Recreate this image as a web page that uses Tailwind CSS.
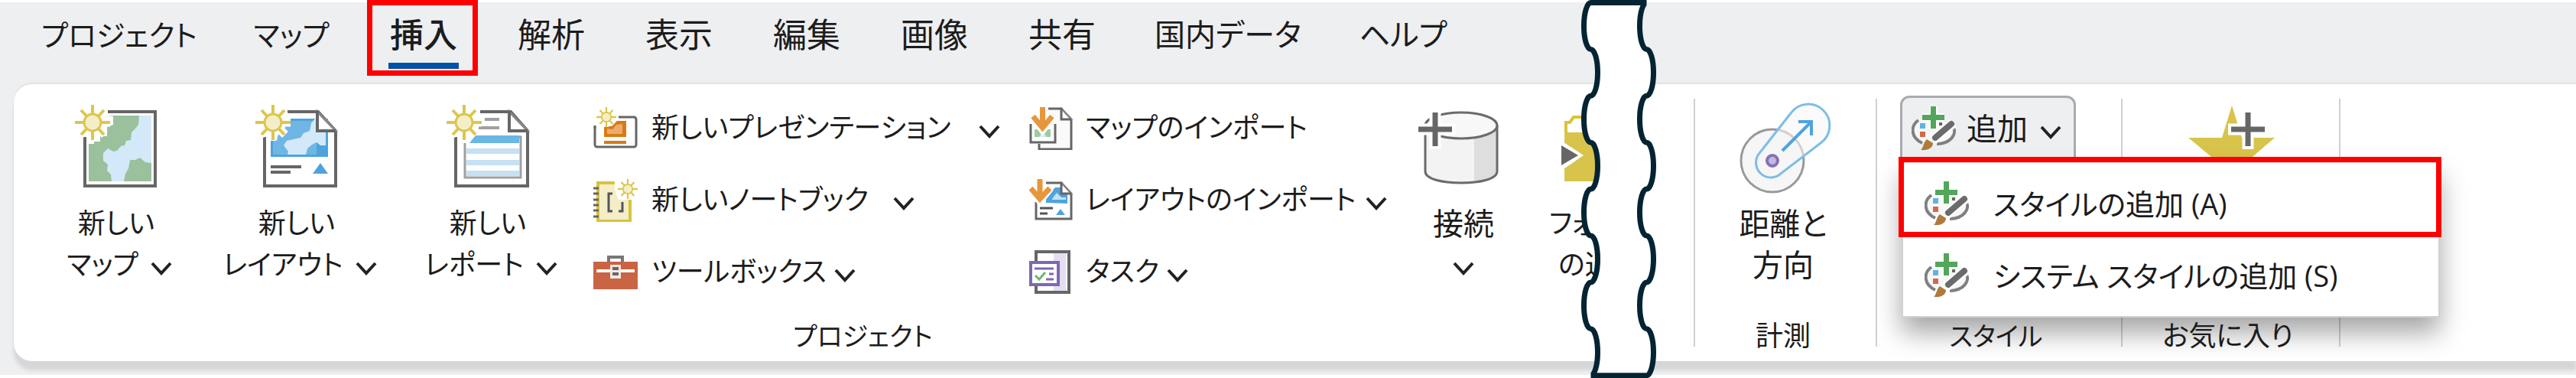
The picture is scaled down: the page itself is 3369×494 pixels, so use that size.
<!DOCTYPE html>
<html lang="ja">

<head>
    <meta charset="UTF-8">
    <meta name="viewport" content="width=device-width, initial-scale=1.0">
    <title>挿入</title>
    <script src="https://cdn.jsdelivr.net/npm/@tailwindcss/browser@4"></script>
</head>

<body class="bg-white">
    <!-- shared symbols -->
    <svg class="hidden">
        <symbol id="chevron" viewBox="0 0 28 18">
            <path d="M2 2L14 15L26 2" fill="none" stroke="#222" stroke-width="4" />
        </symbol>
        <symbol id="sun" viewBox="0 0 46 46">
            <path d="M23 0V46M0 23H46M7 7L39 39M39 7L7 39" stroke="#fff" stroke-width="11" />
            <circle cx="23" cy="23" r="17" fill="#fff" />
            <path d="M23 0V46M0 23H46M8 7L38 39M38 7L8 39" stroke="#dcc64d" stroke-width="4" />
            <circle cx="23" cy="23" r="11" fill="#f4eec8" stroke="#dcc64d" stroke-width="3" />
        </symbol>
        <symbol id="plus" viewBox="0 0 56 56">
            <path d="M28 2V54M2 28H54" stroke="#fff" stroke-width="15" />
            <path d="M28 6V50M6 28H50" stroke="#666" stroke-width="7" />
        </symbol>
        <symbol id="palette" viewBox="0 0 58 58">
            <path d="M9 17C-2 26 -1 42 14 48L28 44L36 49C50 49 60 38 54 26L50 22L30 16Z" fill="#f7f7f7" />
            <path d="M9 18C-2 26 -1 41 14 48M53 25C62 36 50 49 33 49" fill="none" stroke="#808080" stroke-width="4" />
            <path d="M36 23H40" stroke="#666" stroke-width="4" />
            <path d="M28.500 0V29M14 14.500H43" stroke="#fff" stroke-width="11" />
            <path d="M28.500 0V29M14 14.500H43" stroke="#54a65a" stroke-width="7" />
            <path d="M11 22H18V29H11Z" fill="#62b1e3" />
            <path d="M11 33H18V40H11Z" fill="#d2694a" />
            <path d="M54 22L28 44" stroke="#fff" stroke-width="13" />
            <path d="M52 23L31 41" stroke="#6b6b6b" stroke-width="8" stroke-linecap="round" />
            <path d="M20 43L28 48C28 54 22 58 12 57C16 54 15 47 20 43Z" fill="#b07a3c" />
        </symbol>
    </svg>

    <div class="relative w-full overflow-hidden bg-white pt-[3px] pb-1 font-['Open_Sans','Noto_Sans_CJK_JP',sans-serif] text-[#1c1c1c] whitespace-nowrap [font-feature-settings:'palt']">
        <div class="bg-[#eeeff1] pb-[18px]">
            <!-- tabs -->
            <nav class="flex h-[107px] items-start gap-[75px] pl-[54px] pt-3 text-[44px] leading-[60px]">
                <button class="w-[200px] text-[38px]">プロジェクト</button>
                <button class="w-[104px] text-[38px]">マップ</button>
                <button class="relative flex w-[92px] flex-col items-center font-medium">
                    挿入
                    <span class="mt-[7px] h-2 w-full bg-[#0053a6]"></span>
                    <span class="absolute -left-7 -top-[15px] h-[99px] w-[145px] border-[7px] border-[#f00]"></span>
                </button>
                <button class="w-[92px]">解析</button>
                <button class="w-[92px]">表示</button>
                <button class="w-[92px]">編集</button>
                <button class="w-[92px]">画像</button>
                <button class="w-[92px]">共有</button>
                <button class="w-[192px] text-[40px]">国内データ</button>
                <button class="w-[116px] text-[40px]">ヘルプ</button>
            </nav>

            <!-- ribbon -->
            <div class="ml-[18px] flex h-[362px] rounded-l-3xl bg-white text-[36px] leading-[54px] shadow-[0_-2px_2px_#e0e1e3,0_12px_5px_#d5d6d8]">
                <section class="flex w-[2197px] flex-col justify-between pt-[26px] pb-[11px]">
                    <div class="flex gap-[38px] pl-14">
                        <button class="flex w-[164px] flex-col items-center">
                            <svg class="mb-[13px] size-[116px]" viewBox="0 0 116 116">
                                <path d="M13 10H105V107H13Z" fill="#fff" stroke="#666" stroke-width="4" />
                                <path d="M18 15H100V101H18Z" fill="#9ac19b" />
                                <path d="M84 15L83 27L79 32L74 37L73 47L67 48L65 54L60 55L55 61L50 62L43 58L37 64L37 74L43 79L42 87L47 92L48 101H64L66 91L70 84L72 73H79L85 70L92 76L100 77V15Z" fill="#d3e9f9" />
                                <path d="M8 6H43V15L50 16L50 27L42 30L42 42L33 42V49H25V52H18V43H8Z" fill="#fff" />
                                <use href="#sun" y="1" width="46" height="46" />
                            </svg>
                            <span class="pr-2">新しい</span>
                            <span class="flex items-center gap-4">マップ<svg class="mt-2.5 h-[18px] w-7"><use href="#chevron" /></svg></span>
                        </button>
                        <button class="flex w-[232px] flex-col items-center">
                            <svg class="mb-[13px] size-[116px]" viewBox="0 0 116 116">
                                <path d="M12 10H82L105 35V107H12Z" fill="#fff" stroke="#666" stroke-width="4" />
                                <path d="M20 19H95V69H20Z" fill="#4fa3dc" />
                                <path d="M23 22H80V66H23Z" fill="#70b6e5" />
                                <path d="M78 19L73 25L71 35L63 38L59 44L50 46L41 48L37 54L43 62L42 66H66L68 58L74 53L80 50L85 54H92V35H79V19Z" fill="#d3e9f9" />
                                <path d="M20 82H60M20 89H46" stroke="#666" stroke-width="4" />
                                <path d="M85 77L95 91H75Z" fill="#4fa3dc" />
                                <path d="M81 10V35H105Z" fill="#fff" stroke="#888" stroke-width="3" />
                                <path d="M81 9V35H105" fill="none" stroke="#666" stroke-width="4" />
                                <path d="M8 6H42V22L36 36L30 40L27 48L18 48V43H8Z" fill="#fff" />
                                <use href="#sun" y="1" width="46" height="46" />
                            </svg>
                            <span class="pr-2">新しい</span>
                            <span class="flex items-center gap-4">レイアウト<svg class="mt-2.5 h-[18px] w-7"><use href="#chevron" /></svg></span>
                        </button>
                        <button class="flex w-[192px] flex-col items-center">
                            <svg class="mb-[13px] size-[116px]" viewBox="0 0 116 116">
                                <path d="M12 10H84L106 35V107H12Z" fill="#fff" stroke="#666" stroke-width="4" />
                                <path d="M50 20H69M42 31H69" stroke="#a0a0a0" stroke-width="4" />
                                <path d="M24 43H97V96H24Z" fill="#fff" stroke="#a0a0a0" stroke-width="3" />
                                <path d="M28 41H95V51H28Z" fill="#68b7e5" />
                                <path d="M26 58H95V65H26ZM26 73H95V80H26ZM26 87H95V94H26Z" fill="#c5e1f3" />
                                <path d="M82 10V35H106Z" fill="#fff" stroke="#888" stroke-width="3" />
                                <path d="M82 9V35H106" fill="none" stroke="#666" stroke-width="4" />
                                <path d="M8 6H44V22H38L40 38L30 51H20V43H8Z" fill="#fff" />
                                <use href="#sun" y="1" width="46" height="46" />
                            </svg>
                            <span class="pr-2">新しい</span>
                            <span class="flex items-center gap-4">レポート<svg class="mt-2.5 h-[18px] w-7"><use href="#chevron" /></svg></span>
                        </button>

                        <div class="flex w-[532px] flex-col gap-8">
                            <button class="flex h-[62px] items-center">
                                <svg class="mr-[18px] size-[58px]" viewBox="0 0 58 58">
                                    <rect x="2" y="15" width="54" height="39" rx="3" fill="#fff" stroke="#666" stroke-width="3" />
                                    <path d="M14 20H43V41H14Z" fill="#d87a16" />
                                    <path d="M18 37V30L25 31L30 25L38 24V37Z" fill="#ecab6c" />
                                    <path d="M14 48H43" stroke="#d87a16" stroke-width="4" />
                                    <path d="M0 6H33V18L24 27H0Z" fill="#fff" />
                                    <path d="M2 26V30" stroke="#666" stroke-width="3" />
                                    <use href="#sun" x="4" y="2" width="26" height="26" />
                                </svg>
                                新しいプレゼンテーション
                                <svg class="ml-auto mt-2.5 h-[18px] w-7"><use href="#chevron" /></svg>
                            </button>
                            <button class="flex h-[62px] items-center">
                                <svg class="mr-[18px] size-[58px]" viewBox="0 0 58 58">
                                    <path d="M6 7H48V57H6Z" fill="#f4eec8" stroke="#d8c33b" stroke-width="4" />
                                    <path d="M0 14H7M0 21H7M0 29H7M0 36H7M0 43H7M0 51H7" stroke="#666" stroke-width="3" />
                                    <path d="M28 3H58V29H33L28 16Z" fill="#fff" />
                                    <path d="M25 21H20V44H25M33 44H38V32" fill="none" stroke="#555" stroke-width="3" />
                                    <use href="#sun" x="32" y="2" width="26" height="26" />
                                </svg>
                                新しいノートブック
                                <svg class="ml-8 mt-2.5 h-[18px] w-7"><use href="#chevron" /></svg>
                            </button>
                            <button class="flex h-[62px] items-center">
                                <svg class="mr-[18px] size-[58px]" viewBox="0 0 58 58">
                                    <path d="M20 17V10H38V17" fill="none" stroke="#777" stroke-width="4" />
                                    <path d="M0 16H58V52H0Z" fill="#c96444" />
                                    <path d="M4 28H54" stroke="#fff" stroke-width="4" />
                                    <path d="M22 20H36V38H22Z" fill="#f5e8e2" />
                                    <path d="M25 25H33M25 32H33" stroke="#666" stroke-width="4" />
                                </svg>
                                ツールボックス
                                <svg class="ml-2.5 mt-2.5 h-[18px] w-7"><use href="#chevron" /></svg>
                            </button>
                        </div>

                        <div class="flex w-[468px] flex-col gap-8">
                            <button class="flex h-[62px] items-center">
                                <svg class="mr-4 size-[58px]" viewBox="0 0 58 58">
                                    <path d="M13 50V57H55V18L42 4H25" fill="#fafafa" stroke="#666" stroke-width="3" />
                                    <path d="M42 4V18H55Z" fill="#fff" stroke="#888" stroke-width="2" />
                                    <path d="M42 3V18H55" fill="none" stroke="#666" stroke-width="3" />
                                    <path d="M2 24V48H34V24" fill="#fff" stroke="#666" stroke-width="3" />
                                    <path d="M7 31H28V41H7Z" fill="#9ccb9f" />
                                    <path d="M13 41L18 34L23 41Z" fill="#d3e9f9" />
                                    <path d="M17.500 1V32M4 13L17.500 30L31 13" fill="none" stroke="#fff" stroke-width="12" />
                                    <path d="M17.500 2V30M5 14L17.500 29L30 14" fill="none" stroke="#e8963c" stroke-width="7" />
                                </svg>
                                マップのインポート
                            </button>
                            <button class="flex h-[62px] items-center">
                                <svg class="mr-4 size-[58px]" viewBox="0 0 58 58">
                                    <path d="M9 32V54H55V21L42 7H22" fill="#fff" stroke="#666" stroke-width="3" />
                                    <path d="M22 33V25L34 13H41V22H50V34Z" fill="#4fa3dc" />
                                    <path d="M30 28L36 20L42 26H48V29H30Z" fill="#c5e1f3" />
                                    <path d="M42 7V21H55Z" fill="#fff" stroke="#888" stroke-width="2" />
                                    <path d="M42 6V21H55" fill="none" stroke="#666" stroke-width="3" />
                                    <path d="M14 40H31M14 47H24" stroke="#555" stroke-width="3" />
                                    <path d="M41 41L47 49H35Z" fill="#4fa3dc" />
                                    <path d="M14 1V30M2 13L14 29L27 13" fill="none" stroke="#fff" stroke-width="12" />
                                    <path d="M14 2V29M2 14L14 28L27 14" fill="none" stroke="#e8963c" stroke-width="7" />
                                </svg>
                                レイアウトのインポート
                                <svg class="ml-auto mt-2.5 h-[18px] w-7"><use href="#chevron" /></svg>
                            </button>
                            <button class="flex h-[62px] items-center">
                                <svg class="mr-4 size-[58px]" viewBox="0 0 58 58">
                                    <path d="M9 3H52V56H9Z" fill="#fff" stroke="#666" stroke-width="4" />
                                    <path d="M32 5H48V54H32Z" fill="#e5def2" />
                                    <path d="M2 17H38V46H2Z" fill="#fff" stroke="#7d68b4" stroke-width="4" />
                                    <path d="M7 25H32M26 32H32M22 39H32" stroke="#7d68b4" stroke-width="3" />
                                    <path d="M8 34L13 39L21 30" fill="none" stroke="#6cb870" stroke-width="3" />
                                </svg>
                                タスク
                                <svg class="ml-2.5 mt-2.5 h-[18px] w-7"><use href="#chevron" /></svg>
                            </button>
                        </div>

                        <button class="flex w-[124px] flex-col items-center">
                            <svg class="mb-[13px] size-[116px] overflow-visible" viewBox="0 0 116 116">
                                <path d="M8 28V88C8 98 30 103 55 103S102 98 102 88V28Z" fill="#f3f3f3" />
                                <path d="M72 40L102 28V88C102 95 90 100 72 102Z" fill="#dedede" />
                                <path d="M8 28V88C8 98 30 103 55 103S102 98 102 88V28" fill="none" stroke="#6b6b6b" stroke-width="3" />
                                <ellipse cx="55" cy="28" rx="47" ry="17" fill="#f8f8f8" stroke="#6b6b6b" stroke-width="3" />
                                <use href="#plus" x="-7" y="5" width="56" height="56" />
                            </svg>
                            <span class="text-[40px]">接続</span>
                            <svg class="mt-[23px] h-[18px] w-7"><use href="#chevron" /></svg>
                        </button>
                        <button class="flex w-[120px] flex-col items-start pl-3">
                            <svg class="mb-[13px] ml-4 h-[116px] w-[90px]" viewBox="0 0 90 116">
                                <path d="M6 99V24H11L16 17H50L56 24H86V99Z" fill="#fff" stroke="#d8c33b" stroke-width="4" />
                                <path d="M4 37H88V101H4Z" fill="#d8c44a" />
                                <path d="M0 48L29 67L0 87Z" fill="#fff" />
                                <path d="M0 54L22 67L0 80Z" fill="#666" />
                            </svg>
                            <span>フォル</span>
                            <span class="pl-3">の追加</span>
                        </button>
                    </div>
                    <h2 class="pl-6 text-center text-[34px] leading-[44px]">プロジェクト</h2>
                </section>

                <div class="my-[19px] w-0.5 bg-[#cfd1d5]"></div>

                <section class="flex w-[236px] flex-col items-center justify-between pt-[26px] pr-1.5 pb-[11px]">
                    <button class="flex flex-col items-center text-[40px]">
                        <svg class="mb-[13px] size-[116px] overflow-visible" viewBox="0 0 116 116">
                            <circle cx="44" cy="74" r="41" fill="#f6f6f6" stroke="#999" stroke-width="3" />
                            <path d="M28 63L68 12A28 28 0 1 1 107 51L56 90A19 19 0 0 1 28 63Z" fill="#f6f6f6" fill-opacity=".6" stroke="#7dbde6" stroke-width="3" />
                            <path d="M57 61L94 24M78 23H95V41" fill="none" stroke="#4fa3dc" stroke-width="4" />
                            <circle cx="44" cy="74" r="7" fill="#c3b8e0" stroke="#8571b3" stroke-width="4" />
                        </svg>
                        <span>距離と</span>
                        <span>方向</span>
                    </button>
                    <h2 class="text-[36px] leading-[44px]">計測</h2>
                </section>

                <div class="my-[19px] w-0.5 bg-[#cfd1d5]"></div>

                <section class="relative flex w-[319px] flex-col justify-between pt-[15px] pb-[11px]">
                    <button class="ml-[30px] flex h-[86px] w-[230px] items-center rounded-t-xl border-[3px] border-[#a9abb0] bg-[#eeeff1] pl-3 text-[40px]">
                        <svg class="mr-3.5 size-[58px]"><use href="#palette" /></svg>
                        追加
                        <svg class="ml-4 mt-2.5 h-[18px] w-7"><use href="#chevron" /></svg>
                    </button>
                    <div class="absolute left-8 top-[101px] z-10 w-[704px] border-2 border-[#cfd1d5] bg-white pt-1.5 pb-1.5 text-[38px] shadow-[0_20px_32px_rgba(0,0,0,0.35)]">
                        <button class="flex h-[94px] w-full items-center pl-7">
                            <svg class="mr-8 size-[58px]"><use href="#palette" /></svg>
                            スタイルの追加 (A)
                        </button>
                        <button class="flex h-[94px] w-full items-center pl-7">
                            <svg class="mr-8 size-[58px]"><use href="#palette" /></svg>
                            システム スタイルの追加 (S)
                        </button>
                        <span class="absolute -left-1.5 -top-2 h-[105px] w-[710px] border-[7px] border-[#f00]"></span>
                    </div>
                    <h2 class="relative z-20 pr-2 text-center text-[34px] leading-[44px]">スタイル</h2>
                </section>

                <div class="my-[19px] w-0.5 bg-[#cfd1d5]"></div>

                <section class="flex w-[283px] flex-col items-center justify-between pt-[26px] pb-[11px]">
                    <button aria-label="お気に入りに追加">
                        <svg class="size-[116px]" viewBox="0 0 116 116">
                            <path d="M59 2L72 44H115L81 73L94 112L59 88L24 112L37 73L2 44H46Z" fill="#d8c44a" />
                            <use href="#plus" x="52" y="5" width="56" height="56" />
                        </svg>
                    </button>
                    <h2 class="relative z-20 pr-2 text-[36px] leading-[44px]">お気に入り</h2>
                </section>

                <div class="my-[19px] w-0.5 bg-[#cfd1d5]"></div>
                <div class="flex-1"></div>
            </div>
        </div>

        <!-- torn strip across the ribbon -->
        <svg class="absolute left-[2068px] top-0 z-30 h-full w-[98px]" viewBox="0 0 98 494">
            <path d="M12.500 3.500a9 30.400 0 0 0 0 60.900a9 30.400 0 0 1 0 60.900a9 30.400 0 0 0 0 60.900a9 30.400 0 0 1 0 60.900a9 30.400 0 0 0 0 60.900a9 30.400 0 0 1 0 60.900a9 30.400 0 0 0 0 60.900a9 30.400 0 0 1 0 60.900H85.500a9 30.400 0 0 0 0 -60.900a9 30.400 0 0 1 0 -60.900a9 30.400 0 0 0 0 -60.900a9 30.400 0 0 1 0 -60.900a9 30.400 0 0 0 0 -60.900a9 30.400 0 0 1 0 -60.900a9 30.400 0 0 0 0 -60.900a9 30.400 0 0 1 0 -60.900Z" fill="#fff" stroke="#042433" stroke-width="7" />
        </svg>
    </div>
</body>

</html>
